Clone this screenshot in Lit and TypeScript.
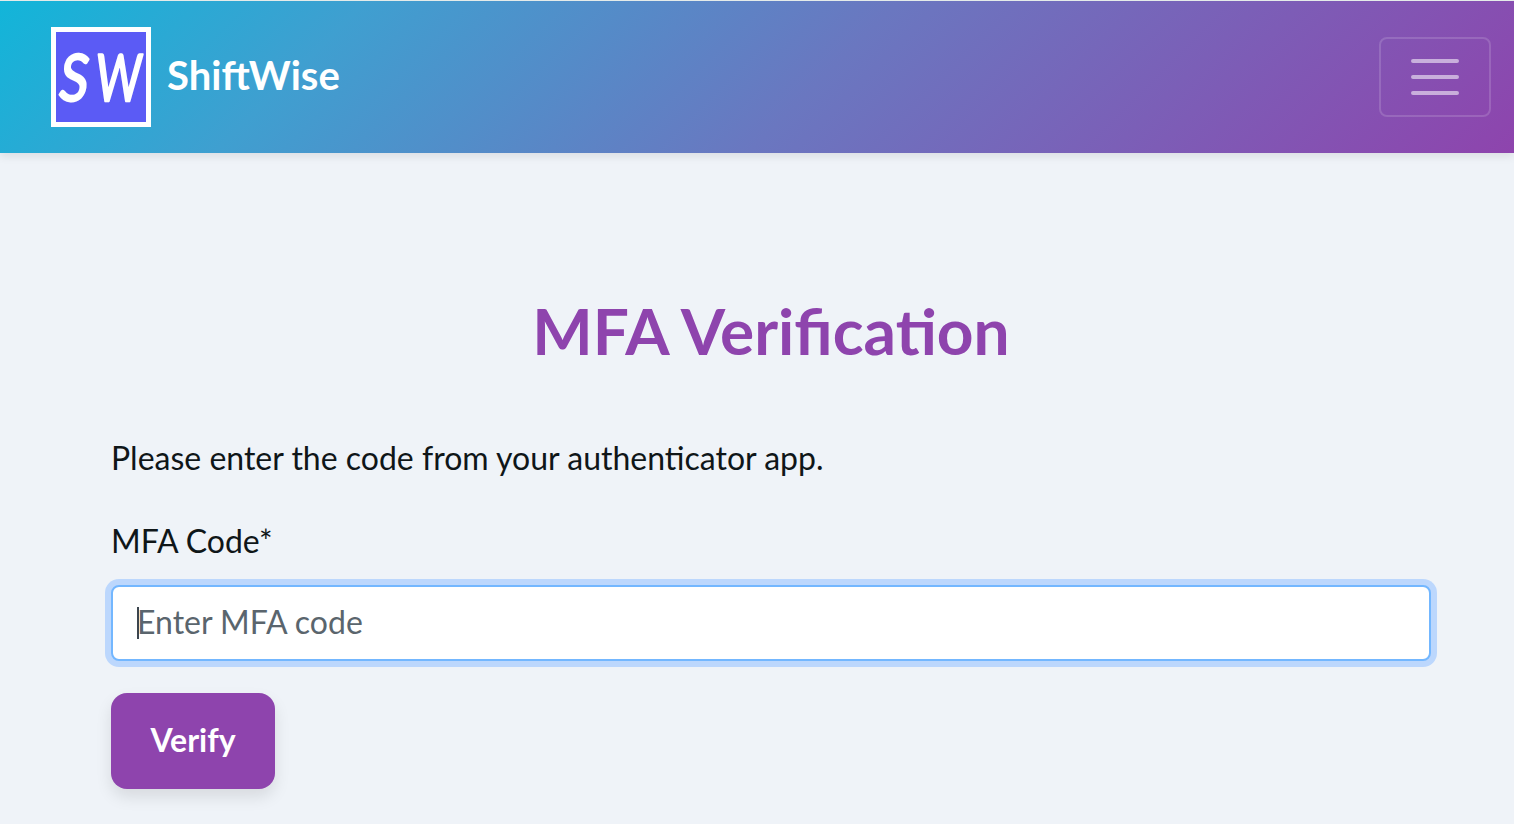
import { LitElement, html, css } from "lit";
import { customElement } from "lit/decorators.js";

@customElement("app-root")
export class AppRoot extends LitElement {
  static styles = css`
    :host {
      display: block;
      min-height: 824px;
      background: #eff3f8;
      color: #0f1618;
      font: 400 32px/48px Lato, Carlito, sans-serif;
    }
    * { box-sizing: border-box; }
    .bar {
      display: flex;
      align-items: center;
      justify-content: space-between;
      height: 153px;
      padding: 0 23px 1px 51px;
      border-top: 1px solid #e4ebe9;
      background: linear-gradient(135deg, #12b5d9 0%, #3f9fd0 22%, #6a77c0 54%, #8e44ad 100%);
      background-clip: padding-box;
      box-shadow: 0 4px 8px rgba(0, 0, 0, 0.08);
    }
    .brand {
      display: flex;
      align-items: center;
      gap: 16px;
      color: #fff;
      font-size: 40px;
      font-weight: 700;
      line-height: 60px;
    }
    .logo { display: block; width: 100px; height: 100px; }
    .name { padding-bottom: 4px; }
    .toggle {
      display: flex;
      align-items: center;
      justify-content: center;
      width: 112px;
      height: 80px;
      margin-top: 1px;
      padding: 0;
      border: 2px solid rgba(255, 255, 255, 0.15);
      border-radius: 8px;
      background: none;
    }
    .form {
      display: flex;
      flex-direction: column;
      align-items: flex-start;
      padding: 138px 83px 0 111px;
    }
    .title {
      align-self: center;
      margin: 0 0 64px;
      color: #8e44ad;
      font-size: 64px;
      font-weight: 700;
      line-height: 79px;
    }
    .hint { margin: 0 0 35px; }
    .label { margin-bottom: 20px; }
    .field {
      display: flex;
      align-items: center;
      width: 100%;
      height: 76px;
      padding: 0 24px;
      border: 2px solid #73b7ff;
      border-radius: 8px;
      background: #fff;
      box-shadow: 0 0 0 6px #bcd7fd;
      color: #5a656d;
    }
    .caret { width: 2px; height: 32px; background: #3c454e; }
    .placeholder { margin-left: -2px; padding-bottom: 2px; }
    .verify {
      width: 164px;
      height: 96px;
      margin-top: 32px;
      padding: 0 0 2px;
      border: 0;
      border-radius: 16px;
      background: #8e44ad;
      box-shadow: 0 8px 16px rgba(0, 0, 0, 0.1);
      color: #fff;
      font: inherit;
      font-weight: 700;
    }
  `;

  render() {
    return html`
      <header class="bar">
        <div class="brand">
          <svg class="logo" viewBox="0 0 100 100">
            <rect width="100" height="100" fill="#fff" />
            <rect x="5" y="5" width="90" height="90" fill="#5b5bf5" />
            <g fill="#fff" stroke="#fff" stroke-width="2.4" stroke-linejoin="round"
               font-family="Lato, sans-serif" font-size="65" font-weight="400">
              <text transform="translate(6 73) rotate(3) skewX(-5) scale(.82 1)">S</text>
              <text transform="translate(43.5 73.5) skewX(-4) scale(.68 1)">W</text>
            </g>
          </svg>
          <span class="name">ShiftWise</span>
        </div>
        <button class="toggle" aria-label="Menu">
          <svg width="60" height="60" viewBox="0 0 60 60" stroke="#fff" stroke-opacity="0.55" stroke-width="4" stroke-linecap="round">
            <path d="M8 14H52M8 30H52M8 46H52" />
          </svg>
        </button>
      </header>
      <main class="form">
        <h1 class="title">MFA Verification</h1>
        <p class="hint">Please enter the code from your authenticator app.</p>
        <div class="label">MFA Code*</div>
        <div class="field"><span class="caret"></span><span class="placeholder">Enter MFA code</span></div>
        <button class="verify">Verify</button>
      </main>
    `;
  }
}
